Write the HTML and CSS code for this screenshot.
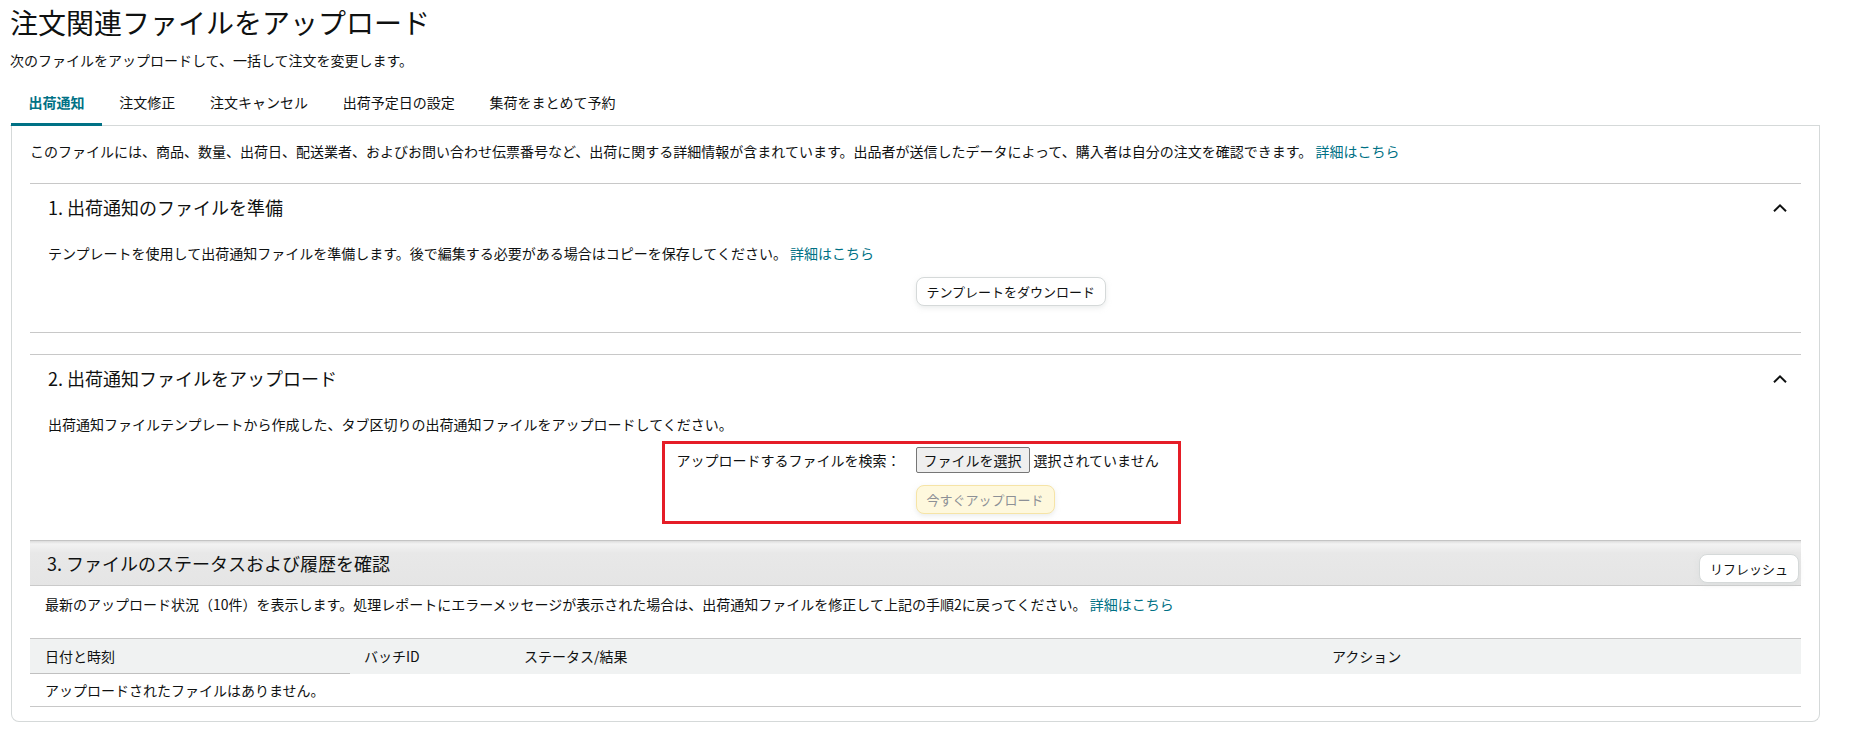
FILE: index.html
```html
<!DOCTYPE html>
<html lang="ja">
<head>
<meta charset="utf-8"/>
<meta content="width=device-width, initial-scale=1.0" name="viewport"/>
<title>注文関連ファイルをアップロード</title>
<link rel="stylesheet" href="styles.css">
</head>
<body>
<div class="page">
  <h1 class="title">注文関連ファイルをアップロード</h1>
  <p class="lead">次のファイルをアップロードして、一括して注文を変更します。</p>

  <nav class="tabs">
    <a class="tab active">出荷通知</a>
    <a class="tab">注文修正</a>
    <a class="tab">注文キャンセル</a>
    <a class="tab">出荷予定日の設定</a>
    <a class="tab">集荷をまとめて予約</a>
  </nav>

  <div class="panel">
    <p class="intro">このファイルには、商品、数量、出荷日、配送業者、およびお問い合わせ伝票番号など、出荷に関する詳細情報が含まれています。出品者が送信したデータによって、購入者は自分の注文を確認できます。 <a class="link">詳細はこちら</a></p>

    <section class="step">
      <div class="step-head">
        <h2>1. 出荷通知のファイルを準備</h2>
        <svg class="chevron" width="14" height="8" viewBox="0 0 14 8"><polyline points="1,7.2 7,1.4 13,7.2" fill="none" stroke="#0f1111" stroke-width="2"/></svg>
      </div>
      <div class="step-body step-body-first">
        <p>テンプレートを使用して出荷通知ファイルを準備します。後で編集する必要がある場合はコピーを保存してください。 <a class="link">詳細はこちら</a></p>
        <div class="download-row">
          <button class="btn">テンプレートをダウンロード</button>
        </div>
      </div>
    </section>

    <section class="step step-upload">
      <div class="step-head">
        <h2>2. 出荷通知ファイルをアップロード</h2>
        <svg class="chevron" width="14" height="8" viewBox="0 0 14 8"><polyline points="1,7.2 7,1.4 13,7.2" fill="none" stroke="#0f1111" stroke-width="2"/></svg>
      </div>
      <div class="step-body">
        <p>出荷通知ファイルテンプレートから作成した、タブ区切りの出荷通知ファイルをアップロードしてください。</p>
        <div class="upload-form">
          <label class="upload-label">アップロードするファイルを検索：</label>
          <div class="file-field">
            <span class="file-btn">ファイルを選択</span>
            <span class="file-name">選択されていません</span>
          </div>
          <span></span>
          <div><button class="btn btn-upload" disabled>今すぐアップロード</button></div>
        </div>
      </div>
    </section>

    <section class="status">
      <div class="status-head">
        <h2>3. ファイルのステータスおよび履歴を確認</h2>
        <button class="btn btn-refresh">リフレッシュ</button>
      </div>
      <p class="status-note">最新のアップロード状況（10件）を表示します。処理レポートにエラーメッセージが表示された場合は、出荷通知ファイルを修正して上記の手順2に戻ってください。 <a class="link">詳細はこちら</a></p>
      <table class="history">
        <colgroup>
          <col style="width: 320px"/>
          <col style="width: 160px"/>
          <col style="width: 808px"/>
          <col/>
        </colgroup>
        <thead>
          <tr>
            <th class="sorted">日付と時刻</th>
            <th>バッチID</th>
            <th>ステータス/結果</th>
            <th>アクション</th>
          </tr>
        </thead>
        <tbody>
          <tr>
            <td colspan="4">アップロードされたファイルはありません。</td>
          </tr>
        </tbody>
      </table>
    </section>
  </div>
</div>
</body>
</html>
```

FILE: styles.css
```css
body {
  margin: 0;
  background: #fff;
  color: #0f1111;
  font-family: "Noto Sans CJK JP", "Noto Sans", sans-serif;
  font-size: 14px;
  line-height: 20px;
}
.page {
  padding: 4px 29px 0 10px;
}
.title {
  margin: 0;
  font-size: 28px;
  line-height: 36px;
  font-weight: normal;
}
.lead {
  margin: 10px 0 0;
}
p {
  margin: 0;
}
.link {
  color: #007185;
  cursor: pointer;
}

/* tabs */
.tabs {
  display: flex;
  margin-top: 11px;
  padding-left: 1px;
  border-bottom: 1px solid #d5d9d9;
}
.tab {
  padding: 11px 17.4px;
  border-bottom: 3px solid transparent;
  margin-bottom: -1px;
  cursor: pointer;
}
.tab.active {
  color: #007185;
  font-weight: bold;
  border-bottom-color: #007185;
}

/* main panel */
.panel {
  margin-left: 1px;
  border: 1px solid #d5d9d9;
  border-top: none;
  border-radius: 0 0 8px 8px;
  padding: 15px 18px 14px;
}
.intro {
  margin-bottom: 22px;
}
.step {
  border-top: 1px solid #c8c8c8;
}
.step + .step {
  margin-top: 21px;
}
.step:first-of-type {
  border-bottom: 1px solid #c8c8c8;
}
.step-head {
  display: flex;
  align-items: center;
  justify-content: space-between;
  height: 46px;
  padding: 0 14px 0 18px;
}
.step-head h2, .status-head h2 {
  margin: 0;
  font-size: 18px;
  line-height: 24px;
  font-weight: normal;
}
.chevron {
  margin-top: 2px;
}
.step-body {
  padding: 13px 18px 16px;
}
.step-body-first {
  padding-bottom: 26px;
}
.download-row {
  margin-top: 14px;
  padding-left: 50%;
}

/* buttons */
.btn {
  font-family: inherit;
  font-size: 13px;
  line-height: 27px;
  padding: 0 10px;
  color: #0f1111;
  background: #fff;
  border: 1px solid #d5d9d9;
  border-radius: 8px;
  box-shadow: 0 2px 5px rgba(213, 217, 217, 0.5);
  cursor: pointer;
}
.btn-upload {
  color: #8d9096;
  background: #fef8dd;
  border-color: #f6e4a6;
  cursor: default;
}

/* upload form with the red highlight */
.upload-form {
  width: fit-content;
  margin: 7px 0 0 calc(50% - 254px);
  padding: 3px 19px 7px 12px;
  border: 3px solid #e51d27;
  display: grid;
  grid-template-columns: auto auto;
  column-gap: 15px;
  row-gap: 12px;
  align-items: center;
}
.file-field {
  display: flex;
  align-items: center;
  gap: 4px;
}
.file-btn {
  line-height: 24px;
  padding: 0 7px;
  background: #efefef;
  border: 1px solid #767676;
  border-radius: 2px;
}

/* status and history */
.status-head {
  display: flex;
  align-items: center;
  justify-content: space-between;
  height: 44px;
  padding: 0 2px 0 17px;
  border-top: 1px solid #c4c4c4;
  border-bottom: 1px solid #cacaca;
  background: linear-gradient(#dcdcdc, #f3f3f3 3px, #e8e8e8 12px, #e5e5e5);
}
.btn-refresh {
  align-self: flex-end;
  margin-bottom: 2px;
}
.status-note {
  margin-top: 8px;
  padding-left: 15px;
}
.history {
  width: 100%;
  margin-top: 24px;
  border-collapse: collapse;
  table-layout: fixed;
}
.history thead tr {
  border-top: 1px solid #c8c8c8;
  background: #f0f2f2;
}
.history th {
  height: 34px;
  padding: 0 14px;
  text-align: left;
  font-weight: normal;
}
.history th.sorted {
  border-bottom: 1px solid #c0c0c0;
  padding-left: 15px;
}
.history td {
  height: 32px;
  padding: 0 15px;
  border-bottom: 1px solid #c8c8c8;
}
```
